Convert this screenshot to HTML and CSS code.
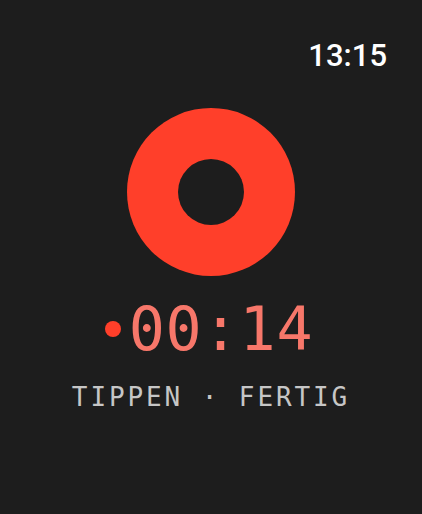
FILE: index.html
```html
<!DOCTYPE html>
<html>
<head>
<meta charset="utf-8">
<link rel="stylesheet" href="styles.css">
</head>
<body>
<div class="screen">
  <div class="status"><span class="clock">13:15</span></div>
  <div class="record"><div class="hole"></div></div>
  <div class="timer"><span class="dot"></span><span class="digits">00:14</span></div>
  <div class="hint">TIPPEN · FERTIG</div>
</div>
</body>
</html>
```
FILE: styles.css
```css
html, body {
  margin: 0;
  padding: 0;
  background: #1d1d1d;
}
.screen {
  width: 422px;
  height: 514px;
  display: flex;
  flex-direction: column;
  align-items: center;
  box-sizing: border-box;
}
.status {
  align-self: stretch;
  display: flex;
  justify-content: flex-end;
  padding: 38px 35px 0 0;
  height: 70px;
  box-sizing: border-box;
}
.clock {
  font-family: "Roboto", "Liberation Sans", sans-serif;
  font-weight: 500;
  font-size: 31px;
  line-height: 36px;
  color: #ffffff;
}
.record {
  margin-top: 38px;
  width: 168px;
  height: 168px;
  border-radius: 50%;
  background: #ff3f2a;
  display: flex;
  align-items: center;
  justify-content: center;
}
.hole {
  width: 66px;
  height: 66px;
  border-radius: 50%;
  background: #1d1d1d;
}
.timer {
  margin-top: 18px;
  display: flex;
  align-items: center;
  gap: 8px;
  font-family: "DejaVu Sans Mono", monospace;
  font-size: 60px;
  letter-spacing: 0.8px;
  line-height: 70px;
  color: #f7776a;
  margin-left: -4px;
}
.dot {
  width: 16px;
  height: 16px;
  border-radius: 50%;
  background: #ff3f2a;
}
.hint {
  margin-top: 18px;
  font-family: "DejaVu Sans Mono", monospace;
  font-size: 26px;
  letter-spacing: 2.9px;
  color: #c6c6c6;
  line-height: 30px;
}
```
